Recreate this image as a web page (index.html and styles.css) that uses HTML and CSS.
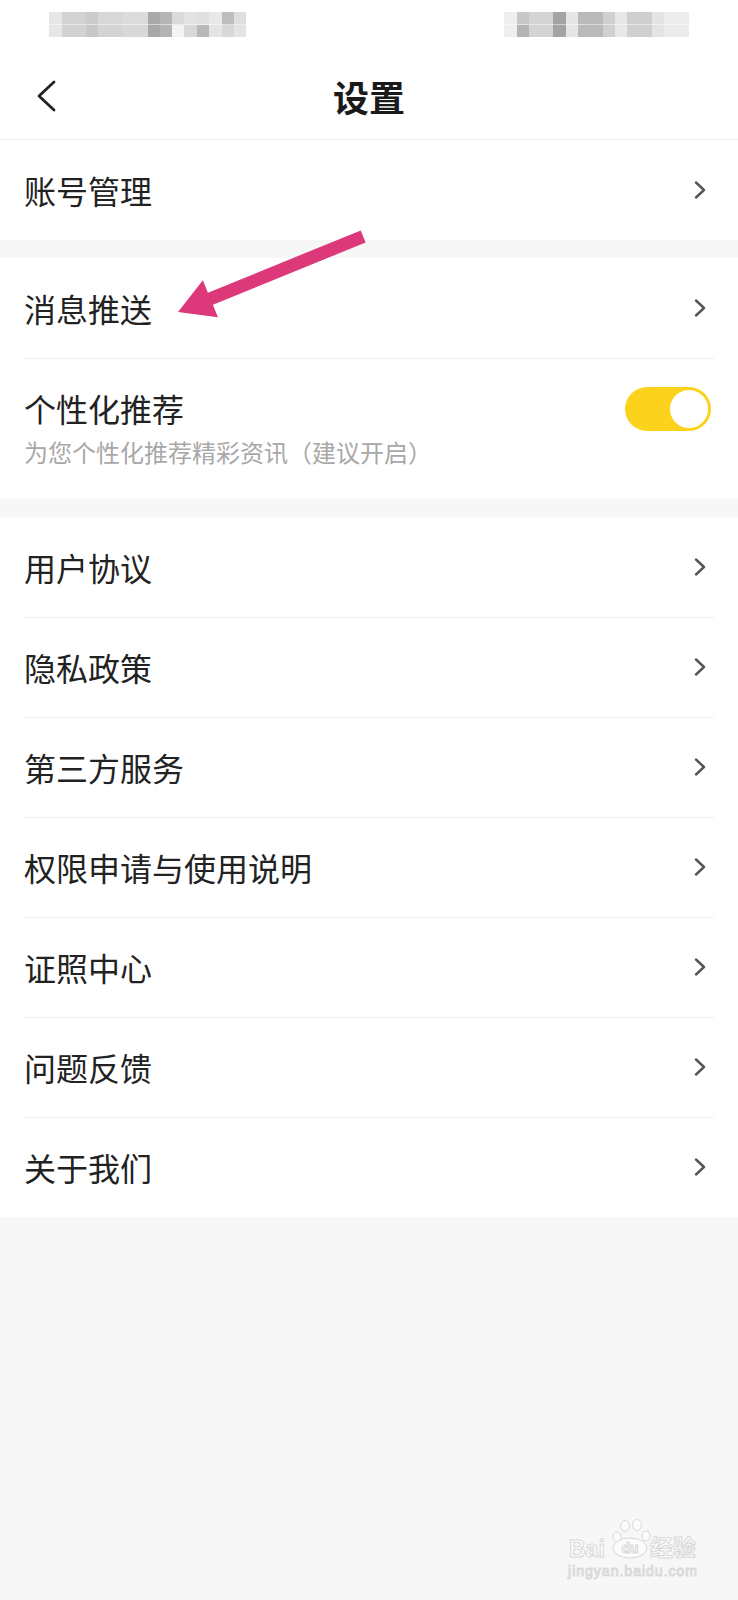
FILE: index.html
```html
<!DOCTYPE html>
<html lang="zh-CN">
<head>
    <meta charset="UTF-8">
    <meta name="viewport" content="width=device-width, initial-scale=1.0">
    <title>设置</title>
    <link rel="stylesheet" href="styles.css">
</head>
<body>
    <div class="page">
        <header class="top">
            <div class="statusbar">
                <span class="blur blur-left"></span>
                <span class="blur blur-right"></span>
            </div>
            <div class="navbar">
                <svg class="back" viewBox="0 0 20 32" width="20" height="32">
                    <path d="M18 2 L3 16 L18 30" />
                </svg>
                <h1 class="title">设置</h1>
                <span></span>
            </div>
        </header>

        <section class="group">
            <div class="row">
                <span class="label">账号管理</span>
                <svg class="chevron" viewBox="0 0 12 18" width="12" height="18"><path d="M2 1.5 L10 9 L2 16.5" /></svg>
            </div>
        </section>

        <section class="group">
            <div class="row">
                <span class="label">消息推送</span>
                <svg class="chevron" viewBox="0 0 12 18" width="12" height="18"><path d="M2 1.5 L10 9 L2 16.5" /></svg>
            </div>
            <div class="row row-tall">
                <div class="text">
                    <div class="label">个性化推荐</div>
                    <div class="desc">为您个性化推荐精彩资讯（建议开启）</div>
                </div>
                <span class="switch"><span class="knob"></span></span>
            </div>
        </section>

        <section class="group">
            <div class="row">
                <span class="label">用户协议</span>
                <svg class="chevron" viewBox="0 0 12 18" width="12" height="18"><path d="M2 1.5 L10 9 L2 16.5" /></svg>
            </div>
            <div class="row">
                <span class="label">隐私政策</span>
                <svg class="chevron" viewBox="0 0 12 18" width="12" height="18"><path d="M2 1.5 L10 9 L2 16.5" /></svg>
            </div>
            <div class="row">
                <span class="label">第三方服务</span>
                <svg class="chevron" viewBox="0 0 12 18" width="12" height="18"><path d="M2 1.5 L10 9 L2 16.5" /></svg>
            </div>
            <div class="row">
                <span class="label">权限申请与使用说明</span>
                <svg class="chevron" viewBox="0 0 12 18" width="12" height="18"><path d="M2 1.5 L10 9 L2 16.5" /></svg>
            </div>
            <div class="row">
                <span class="label">证照中心</span>
                <svg class="chevron" viewBox="0 0 12 18" width="12" height="18"><path d="M2 1.5 L10 9 L2 16.5" /></svg>
            </div>
            <div class="row">
                <span class="label">问题反馈</span>
                <svg class="chevron" viewBox="0 0 12 18" width="12" height="18"><path d="M2 1.5 L10 9 L2 16.5" /></svg>
            </div>
            <div class="row">
                <span class="label">关于我们</span>
                <svg class="chevron" viewBox="0 0 12 18" width="12" height="18"><path d="M2 1.5 L10 9 L2 16.5" /></svg>
            </div>
        </section>

        <!-- annotation arrow pointing at 消息推送 -->
        <svg class="pointer" viewBox="0 0 738 400" width="738" height="400">
            <g transform="translate(178 312) rotate(-22.2)">
                <polygon points="0,0 35,-20 35,-6.5 200,-6.5 200,6.5 35,6.5 35,20" />
            </g>
        </svg>

        <!-- watermark -->
        <svg class="watermark" viewBox="0 0 140 72" width="140" height="72">
            <text class="wm-latin" x="7" y="43">Bai</text>
            <ellipse cx="55" cy="23" rx="4" ry="5" />
            <ellipse cx="63" cy="12" rx="4.5" ry="5.5" />
            <ellipse cx="75" cy="11" rx="4.5" ry="5.5" />
            <ellipse cx="84" cy="22" rx="4" ry="5" />
            <ellipse cx="68" cy="34" rx="17" ry="10" />
            <text class="wm-du" x="68" y="39" text-anchor="middle">du</text>
            <text class="wm-cn" x="88" y="42">经验</text>
            <text class="wm-url" x="6" y="62" textLength="129" lengthAdjust="spacing">jingyan.baidu.com</text>
        </svg>
    </div>
</body>
</html>
```

FILE: styles.css
```css
body {
    margin: 0;
    background: #f7f7f7;
    font-family: "Noto Sans CJK SC", "Noto Sans", sans-serif;
    color: #222;
}

.page {
    position: relative;
    width: 738px;
    min-height: 1600px;
}

.top {
    background: #fff;
    border-bottom: 1px solid #efefef;
}

.statusbar {
    height: 52px;
    box-sizing: border-box;
    padding: 12px 49px 0 49px;
    display: flex;
    justify-content: space-between;
}

.blur {
    display: block;
    height: 25px;
    filter: blur(0.7px);
    background-repeat: no-repeat;
    background-size: 100% 50%;
    background-position: top, bottom;
}

.blur-left {
    width: 197px;
    background-image:
        linear-gradient(to right, #e6e6e6 0 13px, #d2d2d2 13px 37px, #cbcbcb 37px 49px, #d8d8d8 49px 74px, #dcdcdc 74px 99px, #a9a9a9 99px 111px, #b5b5b5 111px 123px, #dadada 123px 135px, #e3e3e3 135px 148px, #e0e0e0 148px 160px, #e8e8e8 160px 173px, #bdbdbd 173px 185px, #dedede 185px),
        linear-gradient(to right, #e6e6e6 0 13px, #d2d2d2 13px 37px, #c8c8c8 37px 49px, #d4d4d4 49px 74px, #d8d8d8 74px 99px, #a8a8a8 99px 111px, #b4b4b4 111px 123px, #f4f4f4 123px 135px, #d8d8d8 135px 148px, #b8b8b8 148px 160px, #e4e4e4 160px 173px, #d8d8d8 173px 185px, #e4e4e4 185px);
}

.blur-right {
    width: 185px;
    background-image:
        linear-gradient(to right, #efefef 0 13px, #c8c8c8 13px 25px, #d4d4d4 25px 49px, #a4a4a4 49px 62px, #e6e6e6 62px 74px, #bababa 74px 99px, #d0d0d0 99px 111px, #e8e8e8 111px 123px, #cfcfcf 123px 148px, #e4e4e4 148px 160px, #ececec 160px),
        linear-gradient(to right, #efefef 0 13px, #b4b4b4 13px 25px, #d4d4d4 25px 49px, #a4a4a4 49px 62px, #e6e6e6 62px 74px, #bababa 74px 99px, #d0d0d0 99px 111px, #e8e8e8 111px 123px, #d0d0d0 123px 148px, #e4e4e4 148px 160px, #ececec 160px);
}

.navbar {
    height: 87px;
    display: grid;
    grid-template-columns: 1fr auto 1fr;
    align-items: center;
    padding-left: 36px;
    padding-right: 36px;
}

.back path {
    fill: none;
    stroke: #222;
    stroke-width: 2.8;
    stroke-linecap: round;
    stroke-linejoin: round;
}

.title {
    margin: 0;
    font-size: 36px;
    font-weight: bold;
    line-height: 1;
    color: #1a1a1a;
}

.group {
    background: #fff;
    margin-bottom: 18px;
}

.row {
    position: relative;
    height: 100px;
    box-sizing: border-box;
    padding: 0 32px 0 24px;
    display: flex;
    align-items: center;
    justify-content: space-between;
}

.row + .row::before {
    content: "";
    position: absolute;
    top: 0;
    left: 24px;
    right: 24px;
    height: 1px;
    background: #efefef;
}

.label {
    font-size: 32px;
    line-height: 40px;
    color: #222;
}

.chevron path {
    fill: none;
    stroke: #555;
    stroke-width: 2.4;
    stroke-linecap: round;
    stroke-linejoin: round;
}

.row-tall {
    height: 141px;
    padding-top: 30px;
    padding-bottom: 29px;
    align-items: flex-start;
}

.desc {
    margin-top: 8px;
    font-size: 24px;
    line-height: 32px;
    color: #a8a8a8;
}

.switch {
    display: flex;
    justify-content: flex-end;
    align-items: center;
    width: 86px;
    height: 44px;
    box-sizing: border-box;
    padding: 1px;
    margin-top: -1px;
    margin-right: -5px;
    border-radius: 22px;
    background: #fdd21c;
}

.knob {
    width: 42px;
    height: 42px;
    box-sizing: border-box;
    border-radius: 50%;
    border: 2px solid #fdd21c;
    background: #fff;
}

.pointer {
    position: absolute;
    top: 0;
    left: 0;
    pointer-events: none;
}

.pointer polygon {
    fill: #dd3879;
}

.watermark {
    position: absolute;
    left: 562px;
    top: 1514px;
}

.watermark text,
.watermark ellipse {
    fill: #fbfbfb;
    stroke: #d8d8d8;
    stroke-width: 1;
}

.wm-latin {
    font-family: "Liberation Sans", Arial, sans-serif;
    font-weight: bold;
    font-size: 23px;
}

.wm-du {
    font-family: "Liberation Sans", Arial, sans-serif;
    font-weight: bold;
    font-size: 14px;
}

.wm-cn {
    font-family: "Noto Sans CJK SC", sans-serif;
    font-weight: bold;
    font-size: 23px;
}

.wm-url {
    font-family: "Liberation Sans", Arial, sans-serif;
    font-size: 14px;
}
```
